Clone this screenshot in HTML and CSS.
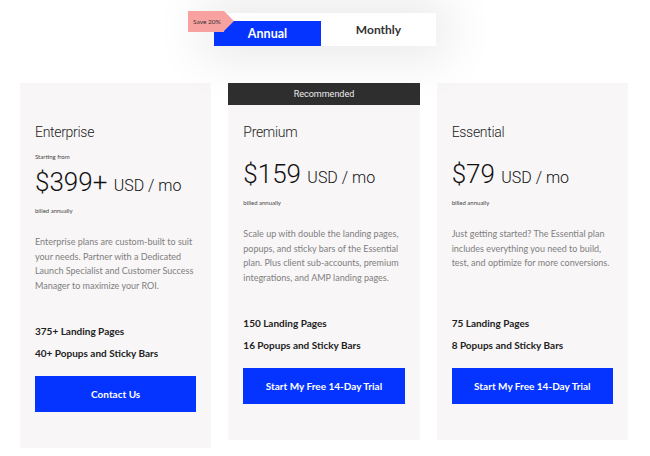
FILE: index.html
```html
<!DOCTYPE html>
<html lang="en">

<head>
    <meta charset="UTF-8">
    <meta name="viewport" content="width=device-width, initial-scale=1.0">
    <title>Pricing</title>
    <link rel="stylesheet" href="styles.css">
</head>

<body>
    <!-- billing period switch -->
    <div class="toggle-wrap">
        <div class="toggle">
            <span class="save-tag">Save 20%</span>
            <a href="#" class="toggle-btn active">Annual</a>
            <a href="#" class="toggle-btn">Monthly</a>
        </div>
    </div>

    <div class="plans">
        <div class="plan">
            <div class="plan-flag"></div>
            <div class="plan-body">
                <h2 class="plan-title">Enterprise</h2>
                <p class="starting">Starting from</p>
                <p class="price">$399+ <span class="unit">USD / mo</span></p>
                <p class="billed">billed annually</p>
                <p class="desc">Enterprise plans are custom-built to suit your needs. Partner with a Dedicated Launch Specialist and Customer Success Manager to maximize your ROI.</p>
                <ul class="features">
                    <li>375+ Landing Pages</li>
                    <li>40+ Popups and Sticky Bars</li>
                </ul>
                <a href="#" class="plan-btn">Contact Us</a>
            </div>
        </div>

        <div class="plan">
            <div class="plan-flag recommended">Recommended</div>
            <div class="plan-body">
                <h2 class="plan-title">Premium</h2>
                <p class="price">$159 <span class="unit">USD / mo</span></p>
                <p class="billed">billed annually</p>
                <p class="desc">Scale up with double the landing pages, popups, and sticky bars of the Essential plan. Plus client sub-accounts, premium integrations, and AMP landing pages.</p>
                <ul class="features">
                    <li>150 Landing Pages</li>
                    <li>16 Popups and Sticky Bars</li>
                </ul>
                <a href="#" class="plan-btn">Start My Free 14-Day Trial</a>
            </div>
        </div>

        <div class="plan">
            <div class="plan-flag"></div>
            <div class="plan-body">
                <h2 class="plan-title">Essential</h2>
                <p class="price">$79 <span class="unit">USD / mo</span></p>
                <p class="billed">billed annually</p>
                <p class="desc">Just getting started? The Essential plan includes everything you need to build, test, and optimize for more conversions.</p>
                <ul class="features">
                    <li>75 Landing Pages</li>
                    <li>8 Popups and Sticky Bars</li>
                </ul>
                <a href="#" class="plan-btn">Start My Free 14-Day Trial</a>
            </div>
        </div>
    </div>
</body>

</html>
```

FILE: styles.css
```css
body {
    margin: 0;
    background-color: #fff;
    font-family: Lato, "Liberation Sans", sans-serif;
    color: #222;
}

/* Annual / Monthly switch */
.toggle-wrap {
    display: flex;
    justify-content: center;
    padding-top: 13px;
}

.toggle {
    position: relative;
    display: flex;
    align-items: flex-end;
    box-shadow: 0 0 50px 12px rgba(0, 0, 0, 0.09);
}

.toggle-btn {
    display: flex;
    align-items: center;
    justify-content: center;
    text-decoration: none;
    font-size: 12px;
    font-weight: bold;
    color: #333;
    background-color: #fff;
    width: 115px;
    height: 33px;
}

.toggle-btn.active {
    width: 107px;
    height: 25px;
    background-color: #0533ff;
    color: #fff;
    font-size: 12.5px;
}

.save-tag {
    position: absolute;
    left: -26px;
    top: -2px;
    height: 21px;
    width: 36px;
    padding-left: 5px;
    box-sizing: border-box;
    background-color: #f8a1a1;
    font-size: 6.5px;
    line-height: 21px;
    color: #333;
    z-index: 1;
}

/* arrow tip of the tag */
.save-tag::after {
    content: "";
    position: absolute;
    right: -10px;
    top: 0;
    border-top: 10.5px solid transparent;
    border-bottom: 10.5px solid transparent;
    border-left: 10px solid #f8a1a1;
}

/* plan cards */
.plans {
    display: flex;
    align-items: flex-start;
    gap: 17px;
    margin: 37px 22px 0 20px;
}

.plan {
    flex: 1;
    background-color: #f8f6f7;
}

.plan-flag {
    height: 22px;
}

.plan-flag.recommended {
    background-color: #2f2f2f;
    color: #eee;
    font-family: Roboto, sans-serif;
    font-size: 9px;
    line-height: 22px;
    text-align: center;
}

.plan-body {
    padding: 17px 15px 36px;
}

.plan-title {
    margin: 0 0 16px;
    font-family: Roboto, sans-serif;
    font-weight: 300;
    font-size: 14px;
    line-height: 20px;
    letter-spacing: -0.3px;
    color: #222;
}

.starting {
    margin: -5px 0 5px;
    font-size: 6px;
    line-height: 8px;
    color: #444;
}

.price {
    margin: 0;
    font-family: Roboto, sans-serif;
    font-weight: 300;
    font-size: 26px;
    line-height: 32px;
    color: #111;
}

.price .unit {
    font-size: 16px;
}

.billed {
    margin: 4px 0 0;
    font-size: 6px;
    line-height: 10px;
    color: #444;
}

.desc {
    margin: 19px 0 27px;
    min-height: 58px;
    font-size: 9px;
    line-height: 14.5px;
    color: #808080;
}

.features {
    list-style: none;
    margin: 0;
    padding: 0;
}

.features li {
    font-size: 10px;
    font-weight: bold;
    line-height: 22px;
    color: #222;
}

.plan-btn {
    display: block;
    margin-top: 12px;
    height: 36px;
    line-height: 36px;
    background-color: #0533ff;
    color: #fff;
    text-align: center;
    text-decoration: none;
    font-size: 10px;
    font-weight: bold;
}
```
